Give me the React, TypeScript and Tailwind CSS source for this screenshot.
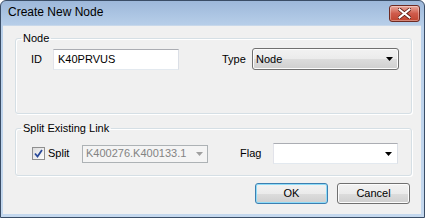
import React from 'react';

const FONT = { fontFamily: '"Liberation Sans", Arial, sans-serif' };

// small black drop-down triangle
const Arrow = ({ color = '#000' }: { color?: string }) => (
  <svg width="7" height="4" viewBox="0 0 7 4">
    <path d="M0 0h7L3.5 4z" fill={color} />
  </svg>
);

const CloseButton = () => (
  <div className="w-[31px] h-[17px] rounded-[3px] border border-[#6e2a22] bg-gradient-to-b from-[#e8a99e] via-[#cf5b4b] to-[#c0442f] flex items-center justify-center shadow-[inset_0_0_0_1px_rgba(255,255,255,0.35)]">
    <svg width="13" height="11" viewBox="0 0 13 11">
      <path d="M1.5 1.5l10 8M11.5 1.5l-10 8" stroke="#5a1a12" strokeWidth="3.6" strokeLinecap="square" />
      <path d="M1.5 1.5l10 8M11.5 1.5l-10 8" stroke="#fff" strokeWidth="2" strokeLinecap="square" />
    </svg>
  </div>
);

const GroupBox = ({ title, className, children }: { title: string; className: string; children: React.ReactNode }) => (
  <fieldset className={`border border-[#d5dfe5] rounded-[3px] shadow-[inset_1px_1px_0_#fff,1px_1px_0_#fff] ${className}`}>
    <legend className="ml-[5px] px-[2px] text-[11px] leading-[14px] text-black">{title}</legend>
    {children}
  </fieldset>
);

const PushButton = ({ label, def }: { label: string; def?: boolean }) => (
  <div
    className={`w-[73px] h-[21px] rounded-[3px] border flex items-center justify-center text-[11px] text-black bg-[linear-gradient(#f2f2f2_0%,#ebebeb_50%,#dddddd_50%,#cfcfcf_100%)] ${
      def ? 'border-[#3c7fb1] shadow-[inset_0_0_0_1px_#8fdcf8]' : 'border-[#707070] shadow-[inset_0_0_0_1px_#fcfcfc]'
    }`}
  >
    {label}
  </div>
);

export default function App() {
  return (
    <div style={FONT} className="w-[425px] h-[218px] flex flex-col rounded-t-[6px] border border-[#3a4d66] bg-[linear-gradient(#9db8da,#b9d0ea_12%,#c4d8ee)] overflow-hidden">
      {/* title bar */}
      <div className="h-[24px] flex items-start justify-between shrink-0">
        <div className="pl-[7px] pt-[4px] text-[12px] leading-[15px] text-black">Create New Node</div>
        <div className="mt-[4px] mr-[4px]">
          <CloseButton />
        </div>
      </div>

      {/* client area */}
      <div className="flex-1 ml-[2px] mr-[3px] mb-[3px] bg-[#f0f0f0] border-t border-[#c8d8ea] pt-[5px] pl-[12px] text-[11px] text-black">
        <GroupBox title="Node" className="w-[397px] h-[83px]">
          <div className="flex items-center pt-[4px] pl-[15px]">
            <span className="w-[22px]">ID</span>
            <div className="w-[126px] h-[21px] border border-[#abadb3] border-l-[#e2e3ea] border-r-[#dbdfe6] border-b-[#e3e9ef] bg-white flex items-center pl-[4px]">
              K40PRVUS
            </div>
            <span className="ml-[43px] w-[30px]">Type</span>
            <div className="w-[147px] h-[22px] rounded-[3px] border border-[#707070] bg-[linear-gradient(#f2f2f2_0%,#ebebeb_50%,#dddddd_50%,#cfcfcf_100%)] shadow-[inset_0_0_0_1px_#fcfcfc] flex items-center justify-between pl-[3px] pr-[5px] -mt-[1px]">
              <span>Node</span>
              <Arrow />
            </div>
          </div>
        </GroupBox>

        <GroupBox title="Split Existing Link" className="w-[397px] h-[55px] mt-[7px]">
          <div className="flex items-center pt-[8px] pl-[16px]">
            <div className="w-[13px] h-[13px] border border-[#8f8f8f] bg-[linear-gradient(135deg,#dcdcdc,#fdfdfd)] flex items-center justify-center">
              <svg width="9" height="9" viewBox="0 0 9 9">
                <path d="M1 4.5l2.5 3L8 1" stroke="#2a4a9a" strokeWidth="1.8" fill="none" />
              </svg>
            </div>
            <span className="ml-[3px] w-[34px]">Split</span>
            <div className="w-[126px] h-[18px] border border-[#adb2b5] bg-[#f4f4f4] flex items-center justify-between pl-[3px] pr-[4px] text-[#838383]">
              <span>K400276.K400133.1</span>
              <Arrow color="#a0a0a0" />
            </div>
            <span className="ml-[32px] w-[33px]">Flag</span>
            <div className="w-[125px] h-[21px] border border-[#abadb3] border-l-[#e2e3ea] border-r-[#dbdfe6] border-b-[#e3e9ef] bg-white flex items-center justify-end pr-[5px]">
              <Arrow />
            </div>
          </div>
        </GroupBox>

        <div className="flex justify-end gap-[9px] mt-[7px] pr-[11px]">
          <PushButton label="OK" def />
          <PushButton label="Cancel" />
        </div>
      </div>
    </div>
  );
}
